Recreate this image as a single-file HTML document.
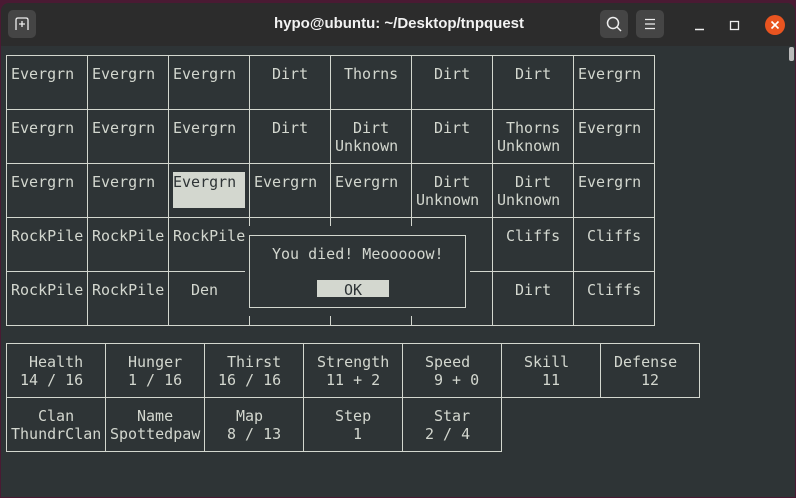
<!DOCTYPE html>
<html><head><meta charset="utf-8"><style>
*{margin:0;padding:0;box-sizing:border-box}
body{width:796px;height:498px;background:#4a1a33;position:relative;overflow:hidden;font-family:"DejaVu Sans Mono","Liberation Mono",monospace}
#win{position:absolute;left:1px;top:3px;width:794px;height:494px;background:#2e3436;border-radius:8px 8px 0 0;overflow:hidden}
#tb{position:absolute;left:0;top:0;width:794px;height:43px;background:#2c2c2c}
.btn{position:absolute;top:7px;width:28px;height:28px;background:#454545;border-radius:5px}
.title{position:absolute;top:12px;left:0;width:796px;text-align:center;color:#f2f2f2;font:bold 15px "Liberation Sans",sans-serif}
.t{position:absolute;font-size:15px;line-height:18px;color:#d3d7cf;white-space:pre;margin-top:1px}
.h{position:absolute;height:1px;background:#d3d7cf}
.v{position:absolute;width:1px;background:#d3d7cf}
</style></head><body>
<div id="win">
<div id="tb">
<div class="btn" style="left:7px"><svg width="28" height="28"><path d="M8 20 V10 Q8 8 10 8 H18 Q20 8 20 10 V20" fill="none" stroke="#eee" stroke-width="1.3"/><path d="M14 11 V17 M11 14 H17" stroke="#eee" stroke-width="1.3"/></svg></div>
<div class="title">hypo@ubuntu: ~/Desktop/tnpquest</div>
<div class="btn" style="left:599px"><svg width="28" height="28"><circle cx="13" cy="13" r="5.5" fill="none" stroke="#eee" stroke-width="1.5"/><path d="M17 17 L21 21" stroke="#eee" stroke-width="1.5"/></svg></div>
<div class="btn" style="left:635px"><svg width="28" height="28"><path d="M9 9.5H19M9 14H19M9 18.5H19" stroke="#eee" stroke-width="1.3"/></svg></div>
<svg style="position:absolute;left:685px;top:8px" width="110" height="30"><path d="M9 18.5H18" stroke="#eee" stroke-width="1.5"/><rect x="44.5" y="10.5" width="8" height="8" fill="none" stroke="#eee" stroke-width="1.3"/><circle cx="89" cy="14" r="10" fill="#e95420"/><path d="M85.5 10.5L92.5 17.5M92.5 10.5L85.5 17.5" stroke="#fff" stroke-width="1.6"/></svg>
</div>
</div>
<div style="position:absolute;left:789px;top:47px;width:5px;height:14px;background:#bbb;border-radius:2px"></div>

<div class="h" style="left:6px;top:55px;width:649px"></div>
<div class="h" style="left:6px;top:109px;width:649px"></div>
<div class="h" style="left:6px;top:163px;width:649px"></div>
<div class="h" style="left:6px;top:217px;width:649px"></div>
<div class="h" style="left:6px;top:271px;width:649px"></div>
<div class="h" style="left:6px;top:325px;width:649px"></div>
<div class="v" style="left:6px;top:55px;height:271px"></div>
<div class="v" style="left:87px;top:55px;height:271px"></div>
<div class="v" style="left:168px;top:55px;height:271px"></div>
<div class="v" style="left:249px;top:55px;height:271px"></div>
<div class="v" style="left:330px;top:55px;height:271px"></div>
<div class="v" style="left:411px;top:55px;height:271px"></div>
<div class="v" style="left:492px;top:55px;height:271px"></div>
<div class="v" style="left:573px;top:55px;height:271px"></div>
<div class="v" style="left:654px;top:55px;height:271px"></div>

<div style="position:absolute;left:173px;top:172px;width:72px;height:36px;background:#d3d7cf"></div>

<div class="t" style="left:11px;top:64px">Evergrn</div>
<div class="t" style="left:92px;top:64px">Evergrn</div>
<div class="t" style="left:173px;top:64px">Evergrn</div>
<div class="t" style="left:272px;top:64px">Dirt</div>
<div class="t" style="left:344px;top:64px">Thorns</div>
<div class="t" style="left:434px;top:64px">Dirt</div>
<div class="t" style="left:515px;top:64px">Dirt</div>
<div class="t" style="left:578px;top:64px">Evergrn</div>
<div class="t" style="left:11px;top:118px">Evergrn</div>
<div class="t" style="left:92px;top:118px">Evergrn</div>
<div class="t" style="left:173px;top:118px">Evergrn</div>
<div class="t" style="left:272px;top:118px">Dirt</div>
<div class="t" style="left:353px;top:118px">Dirt</div>
<div class="t" style="left:335px;top:136px">Unknown</div>
<div class="t" style="left:434px;top:118px">Dirt</div>
<div class="t" style="left:506px;top:118px">Thorns</div>
<div class="t" style="left:497px;top:136px">Unknown</div>
<div class="t" style="left:578px;top:118px">Evergrn</div>
<div class="t" style="left:11px;top:172px">Evergrn</div>
<div class="t" style="left:92px;top:172px">Evergrn</div>
<div class="t" style="left:173px;top:172px;color:#2e3436">Evergrn</div>
<div class="t" style="left:254px;top:172px">Evergrn</div>
<div class="t" style="left:335px;top:172px">Evergrn</div>
<div class="t" style="left:434px;top:172px">Dirt</div>
<div class="t" style="left:416px;top:190px">Unknown</div>
<div class="t" style="left:515px;top:172px">Dirt</div>
<div class="t" style="left:497px;top:190px">Unknown</div>
<div class="t" style="left:578px;top:172px">Evergrn</div>
<div class="t" style="left:11px;top:226px">RockPile</div>
<div class="t" style="left:92px;top:226px">RockPile</div>
<div class="t" style="left:173px;top:226px">RockPile</div>
<div class="t" style="left:506px;top:226px">Cliffs</div>
<div class="t" style="left:587px;top:226px">Cliffs</div>
<div class="t" style="left:11px;top:280px">RockPile</div>
<div class="t" style="left:92px;top:280px">RockPile</div>
<div class="t" style="left:191px;top:280px">Den</div>
<div class="t" style="left:515px;top:280px">Dirt</div>
<div class="t" style="left:587px;top:280px">Cliffs</div>

<div style="position:absolute;left:245px;top:226px;width:225px;height:90px;background:#2e3436"></div>
<div style="position:absolute;left:249px;top:235px;width:217px;height:73px;border:1px solid #d3d7cf"></div>
<div class="t" style="left:272px;top:244px">You died! Meooooow!</div>
<div style="position:absolute;left:317px;top:280px;width:72px;height:17px;background:#d3d7cf"></div>
<div class="t" style="left:344px;top:280px;color:#2e3436">OK</div>

<div class="h" style="left:6px;top:343px;width:694px"></div>
<div class="h" style="left:6px;top:397px;width:694px"></div>
<div class="h" style="left:6px;top:451px;width:496px"></div>
<div class="v" style="left:6px;top:343px;height:109px"></div>
<div class="v" style="left:105px;top:343px;height:109px"></div>
<div class="v" style="left:204px;top:343px;height:109px"></div>
<div class="v" style="left:303px;top:343px;height:109px"></div>
<div class="v" style="left:402px;top:343px;height:109px"></div>
<div class="v" style="left:501px;top:343px;height:109px"></div>
<div class="v" style="left:600px;top:343px;height:55px"></div>
<div class="v" style="left:699px;top:343px;height:55px"></div>

<div class="t" style="left:29px;top:352px">Health</div>
<div class="t" style="left:20px;top:370px">14 / 16</div>
<div class="t" style="left:128px;top:352px">Hunger</div>
<div class="t" style="left:128px;top:370px">1 / 16</div>
<div class="t" style="left:227px;top:352px">Thirst</div>
<div class="t" style="left:218px;top:370px">16 / 16</div>
<div class="t" style="left:317px;top:352px">Strength</div>
<div class="t" style="left:326px;top:370px">11 + 2</div>
<div class="t" style="left:425px;top:352px">Speed</div>
<div class="t" style="left:434px;top:370px">9 + 0</div>
<div class="t" style="left:524px;top:352px">Skill</div>
<div class="t" style="left:542px;top:370px">11</div>
<div class="t" style="left:614px;top:352px">Defense</div>
<div class="t" style="left:641px;top:370px">12</div>
<div class="t" style="left:38px;top:406px">Clan</div>
<div class="t" style="left:11px;top:424px">ThundrClan</div>
<div class="t" style="left:137px;top:406px">Name</div>
<div class="t" style="left:110px;top:424px">Spottedpaw</div>
<div class="t" style="left:236px;top:406px">Map</div>
<div class="t" style="left:227px;top:424px">8 / 13</div>
<div class="t" style="left:335px;top:406px">Step</div>
<div class="t" style="left:353px;top:424px">1</div>
<div class="t" style="left:434px;top:406px">Star</div>
<div class="t" style="left:425px;top:424px">2 / 4</div>
</body></html>
